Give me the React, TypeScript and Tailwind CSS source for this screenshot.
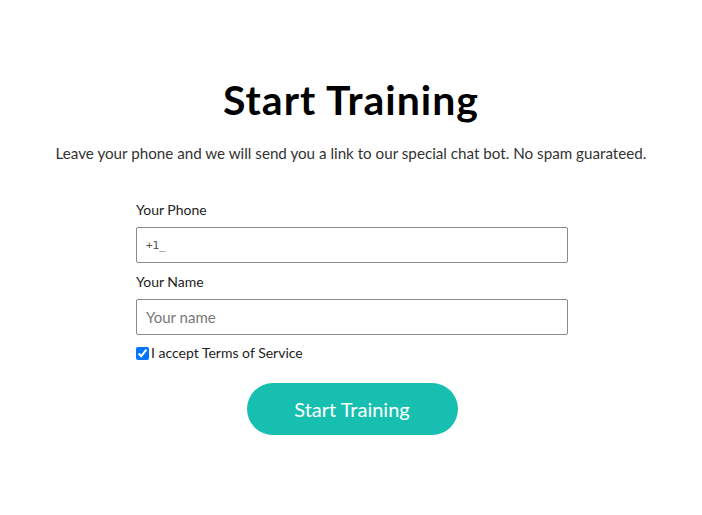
import * as React from 'react'

export default function App() {
    const [phone, setPhone] = React.useState('+1_')
    const [name, setName] = React.useState('')
    const [accepted, setAccepted] = React.useState(true)

    return (
        <div className="min-h-[515px] w-full bg-white text-black [font-family:Lato,'Open_Sans',sans-serif]">
            {/* Header */}
            <div className="flex flex-col items-center pt-[74px]">
                <h1 className="text-[41px] leading-[52px] font-bold tracking-[1px]">Start Training</h1>
                <p className="mt-[15px] text-[15.2px] leading-6 text-[#333]">
                    Leave your phone and we will send you a link to our special chat bot. No spam guarateed.
                </p>
            </div>

            {/* Form */}
            <form className="mx-auto mt-[35px] flex w-[432px] translate-x-[1px] flex-col" onSubmit={(e) => e.preventDefault()}>
                <label className="text-[14px] leading-5 text-[#222]">Your Phone</label>
                <input
                    value={phone}
                    onChange={(e) => setPhone(e.target.value)}
                    className="mt-[7px] h-[36px] w-full rounded-[2px] border border-[#8a8a8a] px-[9px] text-[11px] text-[#555] outline-none [font-family:'DejaVu_Sans_Mono',monospace]"
                />
                <label className="mt-[9px] text-[14px] leading-5 text-[#222]">Your Name</label>
                <input
                    value={name}
                    onChange={(e) => setName(e.target.value)}
                    placeholder="Your name"
                    className="mt-[7px] h-[36px] w-full rounded-[2px] border border-[#8a8a8a] px-[9px] text-[15px] text-[#333] outline-none placeholder:text-[#777]"
                />
                <label className="mt-[8px] flex items-center text-[14px] leading-5 text-[#222]">
                    <input
                        type="checkbox"
                        checked={accepted}
                        onChange={(e) => setAccepted(e.target.checked)}
                        className="mr-[2px] h-[13px] w-[13px] accent-[#0075ff]"
                    />
                    I accept Terms of Service
                </label>
                <button
                    type="submit"
                    className="mx-auto mt-[20px] h-[52px] w-[211px] rounded-full bg-[#17bfb0] text-[20px] text-white"
                >
                    Start Training
                </button>
            </form>
        </div>
    )
}
